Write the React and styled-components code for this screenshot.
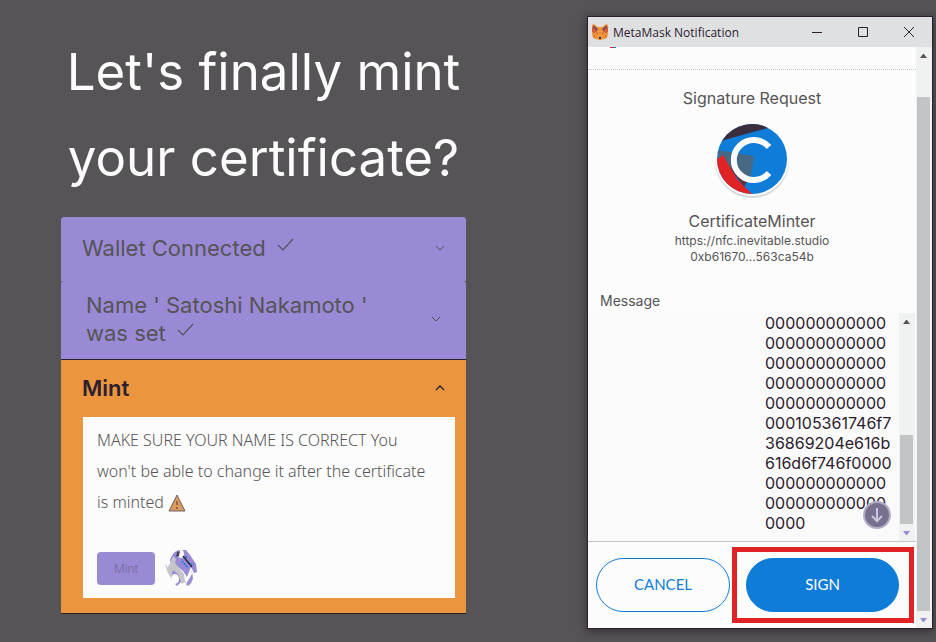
import React from "react";
import styled, { createGlobalStyle } from "styled-components";

const c = {
  page: "#565456",
  purple: "#9a89d5",
  orange: "#eb963f",
  ink: "#2c2030",
  white: "#fcfcfc",
  blue: "#0f7cd8",
  red: "#e02426",
  thumb: "#c1c5c6",
};

const GlobalStyle = createGlobalStyle`
  *, *::before, *::after { box-sizing: border-box; }
  body { margin: 0; background: ${c.page}; font-family: Inter, sans-serif; }
  h1, h2, p { margin: 0; font-weight: 400; }
  button { margin: 0; border: 0; background: none; font: inherit; color: inherit; cursor: pointer; }
  svg { display: block; flex: none; }
`;

const Page = styled.main`
  display: grid;
  grid-template-columns: minmax(0, 405fr) minmax(0, 344fr);
  gap: 122px;
  align-items: start;
  min-height: 100vh;
  padding: 17px 4px 13px 61px;
`;

/* ---- Mint page ---- */

const MintSection = styled.section`
  padding-top: 12px;
`;

const Title = styled.h1`
  margin-bottom: 16px;
  color: ${c.white};
  font-size: 51px;
  line-height: 86px;
  text-align: center;
`;

const Accordion = styled.div`
  border-bottom: 1px solid ${c.ink};
`;

const Item = styled.section`
  border-radius: ${(p) => (p.$open ? 0 : "3px 3px 0 0")};
  border-top: ${(p) => (p.$open ? `1px solid ${c.ink}` : 0)};
  background: ${(p) => (p.$open ? c.orange : c.purple)};
`;

const ItemHeader = styled.button`
  display: flex;
  align-items: center;
  justify-content: space-between;
  width: 100%;
  padding: ${(p) => (p.$inset ? "10px 25px 12px 25px" : "0 21px 2px 21px")};
  min-height: ${(p) => (p.$open ? "57px" : "64px")};
  color: ${(p) => (p.$open ? c.ink : c.page)};
  font-size: 22px;
  font-weight: ${(p) => (p.$open ? 600 : 400)};
  line-height: 28px;
  text-align: left;
`;

const ItemLabel = styled.span`
  max-width: 310px;
`;

const Tick = styled.svg`
  display: inline-block;
  margin-left: 5px;
  vertical-align: 5px;
`;

const ItemBody = styled.div`
  padding: 0 11px 15px 22px;
`;

const Notice = styled.div`
  padding: 8px 20px 11px 14px;
  background: ${c.white};
  color: ${c.page};
`;

const NoticeText = styled.p`
  font-family: "Noto Sans", sans-serif;
  font-size: 16px;
  font-weight: 300;
  line-height: 31px;
`;

const WarningIcon = styled.svg`
  display: inline-block;
  vertical-align: -4px;
`;

const MintRow = styled.div`
  display: flex;
  align-items: center;
  gap: 10px;
  margin-top: 31px;
`;

const MintButton = styled.button`
  width: 58px;
  height: 33px;
  border-radius: 4px;
  background: ${c.purple};
  color: #73699a;
  font-size: 12px;
  font-weight: 300;
`;

/* ---- Wallet window ---- */

const WalletWindow = styled.section`
  display: flex;
  flex-direction: column;
  background: ${c.white};
  color: ${c.page};
  box-shadow: 0 0 0 1px ${c.ink}, 0 2px 8px 2px rgba(40, 25, 42, 0.6);
`;

const TitleBar = styled.header`
  display: flex;
  align-items: center;
  height: 30px;
  padding: 0 0 0 4px;
  gap: 5px;
  background: #dfe0e1;
  color: ${c.ink};
`;

const WindowTitle = styled.h2`
  flex: 1;
  white-space: nowrap;
  font-family: "Open Sans", sans-serif;
  font-size: 12px;
`;

const WindowControls = styled.div`
  display: flex;
`;

const WindowControl = styled.button`
  display: grid;
  place-items: center;
  width: 46px;
  height: 30px;
  padding: 0;
`;

const WindowBody = styled.div`
  display: flex;
`;

const Content = styled.div`
  flex: 1;
  min-width: 0;
  display: flex;
  flex-direction: column;
`;

const NetworkBar = styled.div`
  height: 23px;
  padding-left: 22px;
  border-bottom: 1px dotted ${c.thumb};
`;

const NetworkDot = styled.div`
  width: 6px;
  height: 1px;
  background: linear-gradient(90deg, ${c.red} 50%, ${c.blue} 50%);
`;

const Request = styled.div`
  display: flex;
  flex-direction: column;
  align-items: center;
  padding: 16px 12px 0;
`;

const RequestTitle = styled.h2`
  margin-bottom: 13px;
  font-size: 16px;
  line-height: 24px;
`;

const SiteName = styled.p`
  margin-top: 10px;
  font-size: 16px;
  line-height: 24px;
`;

const SiteDetail = styled.p`
  font-size: 12px;
  line-height: 16px;
`;

const MessageLabel = styled.h2`
  padding: 26px 12px 0;
  font-size: 14px;
  line-height: 20px;
`;

const MessagePanel = styled.div`
  position: relative;
  display: flex;
  justify-content: flex-end;
  height: 228px;
  margin-top: 2px;
  background: #fafafa;
`;

const HexData = styled.p`
  width: 134px;
  color: ${c.ink};
  font-size: 16px;
  line-height: 20px;
  white-space: pre;
`;

const ScrollDown = styled.button`
  position: absolute;
  right: 25px;
  bottom: 12px;
  display: grid;
  place-items: center;
  width: 28px;
  height: 28px;
  padding: 0;
  border: 2px solid #b3adc4;
  border-radius: 50%;
  background: #77718f;
`;

const ScrollTrack = styled.div`
  display: flex;
  flex-direction: column;
  flex: none;
  width: 16px;
  padding: 0 2px 0 1px;
  margin-right: ${(p) => (p.$inner ? "1px" : 0)};
  background: #f0f1f1;
`;

const ScrollSpace = styled.div`
  flex: ${(p) => p.$share} 0 0;
`;

const ScrollThumb = styled.div`
  flex: ${(p) => p.$share} 0 0;
  background: ${c.thumb};
`;

const ScrollArrow = styled.button`
  display: grid;
  place-items: center;
  width: 100%;
  height: 17px;
  padding: 0;
`;

const Footer = styled.footer`
  display: grid;
  grid-template-columns: minmax(0, 134fr) minmax(0, 182fr);
  align-items: center;
  gap: 2px;
  padding: 5px 2px 5px 8px;
  border-top: 1px solid ${c.thumb};
`;

const ActionButton = styled.button`
  width: 100%;
  height: 54px;
  padding: 0 0 2px;
  border: 1px solid ${c.blue};
  border-radius: 27px;
  background: ${(p) => (p.$primary ? c.blue : c.white)};
  color: ${(p) => (p.$primary ? c.white : c.blue)};
  font-family: Lato, sans-serif;
  font-size: 15px;
`;

const SignHighlight = styled.div`
  padding: 6px 10px 6px 9px;
  border: 5px solid ${c.red};
`;

const Chevron = ({ up }) => (
  <svg width="10" height="6" viewBox="0 0 10 6" fill="none" stroke="currentColor" strokeWidth={up ? 1.4 : 1}>
    <path d={up ? "M1 5 5 1l4 4" : "M1 1l4 4 4-4"} />
  </svg>
);

const CheckMark = () => (
  <Tick width="17" height="13" viewBox="0 0 17 13" fill="none" stroke="currentColor" strokeWidth="1.2">
    <path d="M1 7l5 5L16 1" />
  </Tick>
);

const Spinner = () => (
  <svg width="34" height="38" viewBox="0 0 34 38">
    <path d="M5 12C6 6 10 2 14 1h7l4 5 6 9 1 8-3 1-3-6-4 10-4-6-5-4-6-3z" fill={c.purple} />
    <path d="M8 7l3 3-1 4 9 11 1 8-3 2-7-11-5 1-3-5 3-6z" fill="#c4c6c9" />
    <path d="M0 14l8 14 4 6-5-3-5-9z" fill="#c4c6c9" />
    <path d="M8 21l5 4 3 8-4 4-6-6 1-7z" fill={c.purple} />
    <ellipse cx="10" cy="30" rx="4" ry="5" fill={c.white} />
    <ellipse cx="16" cy="5" rx="3" ry="4" fill={c.white} />
    <path d="M12 3l3-1-1 5-3 1z" fill="#4c4359" />
    <path d="M18 7l9 11" stroke={c.ink} strokeWidth="1.4" />
    <path d="M17 12l6 7M20 8h3M25 15h4" stroke={c.blue} strokeWidth="1.6" strokeDasharray="2 1" />
    <path d="M27 22l-6 14 3 1 4-7z" fill={c.purple} />
    <path d="M28 23l-5 9 1-7z" fill={c.white} />
    <path d="M19 31l4 6 4-4" fill="none" stroke="#c4c6c9" />
  </svg>
);

const Fox = () => (
  <svg width="16" height="16" viewBox="0 0 16 16">
    <path d="M0 1l2-1 4 3h4l4-3 2 1v9l-1 4-3 1-3 1H7l-3-1-3-1-1-4z" fill={c.orange} />
    <path d="M1 1l5 4-2 3-3-2zM15 1l-5 4 2 3 3-2z" fill="#8a4a4c" />
    <path d="M0 3l4 3-1 3-3-1zM16 3l-4 3 1 3 3-1z" fill="#dd5a38" />
    <path d="M4 8l2 1-1 1zM12 8l-2 1 1 1z" fill={c.red} />
    <path d="M2 12h1M13 12h1" stroke={c.red} />
    <path d="M7 13h2v2H7z" fill="#3c3148" />
  </svg>
);

const SiteLogo = () => (
  <svg width="80" height="76" viewBox="0 0 80 76">
    <defs>
      <clipPath id="site-circle">
        <circle cx="40" cy="36" r="35" />
      </clipPath>
    </defs>
    <circle cx="40" cy="38" r="37" fill="#d5d7d8" />
    <circle cx="40" cy="36" r="37" fill={c.white} />
    <g clipPath="url(#site-circle)">
      <path d="M0 0h80v76H0z" fill={c.blue} />
      <path d="M0 0h62L56 5 12 17 0 24z" fill="#3a2e3e" />
      <path d="M5 27l37 6-4 26-10-3-21-22z" fill="#476983" />
      <path d="M0 39l11-7 14 24 17 17H0z" fill={c.red} />
      <path d="M18 44l17 15-3 5-9-12z" fill="#563745" />
    </g>
    <path d="M57 24A20 20 0 1 0 57 50" fill="none" stroke={c.white} strokeWidth="6" />
  </svg>
);

const Arrow = ({ up }) => (
  <svg width="7" height="4" viewBox="0 0 7 4">
    <path d={up ? "M0 4l3-4h1l3 4z" : "M0 0l3 4h1l3-4z"} fill={up ? c.page : c.purple} />
  </svg>
);

const Scrollbar = ({ inner, before, thumb, after }) => (
  <ScrollTrack $inner={inner}>
    <ScrollArrow aria-label="Scroll up"><Arrow up /></ScrollArrow>
    <ScrollSpace $share={before} />
    <ScrollThumb $share={thumb} />
    <ScrollSpace $share={after} />
    <ScrollArrow aria-label="Scroll down"><Arrow /></ScrollArrow>
  </ScrollTrack>
);

const zeros = "0".repeat(12);
const hexLines = [
  zeros, zeros, zeros, zeros, zeros,
  "000105361746f7", "36869204e616b", "616d6f746f0000",
  zeros, zeros, "0000",
];

export default function App() {
  return (
    <>
      <GlobalStyle />
      <Page>
        <MintSection>
          <Title>Let's finally mint your certificate?</Title>
          <Accordion>
            <Item>
              <ItemHeader aria-expanded="false">
                <ItemLabel>Wallet Connected <CheckMark /></ItemLabel>
                <Chevron />
              </ItemHeader>
            </Item>
            <Item>
              <ItemHeader $inset aria-expanded="false">
                <ItemLabel>Name ' Satoshi Nakamoto ' was set <CheckMark /></ItemLabel>
                <Chevron />
              </ItemHeader>
            </Item>
            <Item $open>
              <ItemHeader $open aria-expanded="true">
                <ItemLabel>Mint</ItemLabel>
                <Chevron up />
              </ItemHeader>
              <ItemBody>
                <Notice>
                  <NoticeText>
                    MAKE SURE YOUR NAME IS CORRECT You won't be able to change it after the certificate is minted{" "}
                    <WarningIcon width="19" height="18" viewBox="0 0 19 18">
                      <path d="M9 1l8 16H1z" fill="#dc9b5c" stroke="#6b6064" />
                      <path d="M9 7v4M9 13v2" stroke="#6b4a35" strokeWidth="1.2" />
                    </WarningIcon>
                  </NoticeText>
                  <MintRow>
                    <MintButton>Mint</MintButton>
                    <Spinner />
                  </MintRow>
                </Notice>
              </ItemBody>
            </Item>
          </Accordion>
        </MintSection>

        <WalletWindow>
          <TitleBar>
            <Fox />
            <WindowTitle>MetaMask Notification</WindowTitle>
            <WindowControls>
              <WindowControl aria-label="Minimize">
                <svg width="10" height="10" stroke="currentColor"><path d="M0 5.500h10" /></svg>
              </WindowControl>
              <WindowControl aria-label="Maximize">
                <svg width="10" height="10" fill="none" stroke="currentColor"><path d="M.5.5h9v9h-9z" /></svg>
              </WindowControl>
              <WindowControl aria-label="Close">
                <svg width="10" height="10" stroke="currentColor"><path d="M0 0l10 10M10 0L0 10" /></svg>
              </WindowControl>
            </WindowControls>
          </TitleBar>
          <WindowBody>
            <Content>
              <NetworkBar><NetworkDot /></NetworkBar>
              <Request>
                <RequestTitle>Signature Request</RequestTitle>
                <SiteLogo />
                <SiteName>CertificateMinter</SiteName>
                <SiteDetail>https://nfc.inevitable.studio</SiteDetail>
                <SiteDetail>0xb61670...563ca54b</SiteDetail>
              </Request>
              <MessageLabel>Message</MessageLabel>
              <MessagePanel>
                <HexData>{hexLines.join("\n")}</HexData>
                <Scrollbar inner before={105} thumb={89} after={0} />
                <ScrollDown aria-label="Scroll to bottom">
                  <svg width="14" height="16" viewBox="0 0 14 16" fill="none" stroke="#cbc7dc" strokeWidth="2">
                    <path d="M7 1v13M2 9l5 5 5-5" />
                  </svg>
                </ScrollDown>
              </MessagePanel>
              <Footer>
                <ActionButton>CANCEL</ActionButton>
                <SignHighlight><ActionButton $primary>SIGN</ActionButton></SignHighlight>
              </Footer>
            </Content>
            <Scrollbar before={33} thumb={514} after={0} />
          </WindowBody>
        </WalletWindow>
      </Page>
    </>
  );
}
